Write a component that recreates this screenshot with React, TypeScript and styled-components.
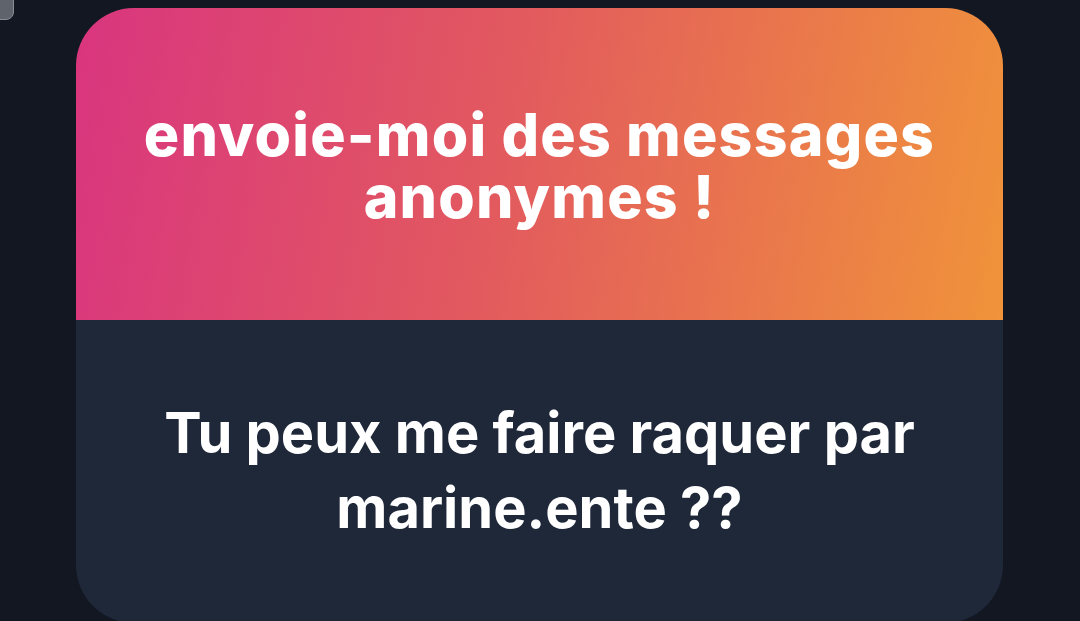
import React from "react";
import styled, { createGlobalStyle } from "styled-components";

const Global = createGlobalStyle`
  html, body { margin: 0; padding: 0; background: #131722; }
  body { font-family: Inter, "Noto Sans", sans-serif; overflow: hidden; }
`;

const Screen = styled.div`
  position: relative;
  width: 1080px;
  height: 621px;
  background: #131722;
  overflow: hidden;
  padding: 8px 0 0 76px;
  box-sizing: border-box;
`;

const CornerTab = styled.div`
  position: absolute;
  left: -14px;
  top: -14px;
  width: 26px;
  height: 32px;
  border-radius: 8px;
  background: #5f636b;
  border: 1px solid #8a8d93;
`;

const Card = styled.div`
  width: 927px;
  height: 615px;
  border-radius: 58px;
  overflow: hidden;
  display: flex;
  flex-direction: column;
  background: #1f2839;
`;

const Header = styled.div`
  height: 312px;
  flex: none;
  display: flex;
  align-items: center;
  justify-content: center;
  background: linear-gradient(100deg, #d9357f 0%, #e2595f 45%, #f0933a 100%);
  box-sizing: border-box;
  padding-top: 4px;
`;

const Title = styled.h1`
  margin: 0;
  display: flex;
  flex-direction: column;
  align-items: center;
  color: #ffffff;
  font-family: Inter, sans-serif;
  font-weight: 800;
  font-size: 59px;
  letter-spacing: 1.2px;
  text-align: center;
`;

const TitleLine = styled.span`
  display: block;
  line-height: 62px;
  height: 62px;
`;

const Body = styled.div`
  flex: 1;
  display: flex;
  justify-content: center;
  padding-top: 76px;
`;

const Message = styled.p`
  margin: 0;
  color: #ffffff;
  font-family: Inter, sans-serif;
  font-weight: 700;
  font-size: 56px;
  line-height: 75px;
  text-align: center;
`;

export default function App() {
  return (
    <>
      <Global />
      <Screen>
        <CornerTab />
        <Card>
          <Header>
            <Title>
              <TitleLine>envoie-moi des messages</TitleLine>
              <TitleLine>anonymes !</TitleLine>
            </Title>
          </Header>
          <Body>
            <Message>
              Tu peux me faire raquer par
              <br />
              marine.ente ??
            </Message>
          </Body>
        </Card>
      </Screen>
    </>
  );
}
